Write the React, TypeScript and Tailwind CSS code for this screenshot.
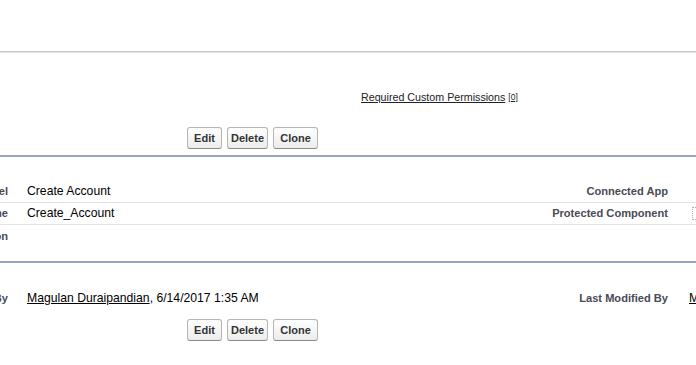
import React from "react";

const font = { fontFamily: '"Liberation Sans", Arial, sans-serif' };

function Btn({ label, w }: { label: string; w: string }) {
  return (
    <button
      className={`${w} h-[22px] flex items-center justify-center rounded-[3px] border border-[#b5b5b5] border-b-[#8a8a8a] bg-linear-to-b from-white to-[#ececec] text-[11px] font-bold text-[#333]`}
    >
      {label}
    </button>
  );
}

function Buttons() {
  return (
    <div className="flex gap-[5px] pl-[187px]">
      <Btn label="Edit" w="w-[35px]" />
      <Btn label="Delete" w="w-[41px]" />
      <Btn label="Clone" w="w-[45px]" />
    </div>
  );
}

function Row({
  label,
  value,
  rlabel,
  rvalue,
  border,
}: {
  label: string;
  value?: React.ReactNode;
  rlabel?: string;
  rvalue?: React.ReactNode;
  border?: boolean;
}) {
  return (
    <div
      className={`flex items-center h-[22px] ${border ? "border-b border-[#e3e3e3]" : ""}`}
    >
      <div className="w-[8px] shrink-0 flex justify-end whitespace-nowrap text-[11.1px] font-bold text-[#4a4a56]">
        <span>{label}</span>
      </div>
      <div className="flex-1 pl-[19px] whitespace-nowrap text-[12.2px] text-black">
        {value}
      </div>
      <div className="shrink-0 whitespace-nowrap text-[11.1px] font-bold text-[#4a4a56]">
        {rlabel}
      </div>
      <div className="w-[28px] shrink-0 pl-[21px] whitespace-nowrap text-[12.2px] text-black">
        {rvalue}
      </div>
    </div>
  );
}

export default function App() {
  return (
    <div
      className="w-[696px] h-[365px] overflow-hidden bg-white relative"
      style={font}
    >
      <div className="h-[51px]" />
      <div className="h-px bg-[#c8c8c8]" />
      <div className="h-px bg-[#e2e2e2]" />
      <div className="h-[102px] pt-[37px]">
        <div className="pl-[361px] h-[14px] flex items-center whitespace-nowrap">
          <span className="text-[10.7px] text-[#222] underline">
            Required Custom Permissions
          </span>
          <span className="ml-[3px] text-[8.5px] text-[#222] underline">[0]</span>
        </div>
        <div className="mt-[23px]">
          <Buttons />
        </div>
      </div>
      <div className="h-[2px] bg-[#98a3be]" />
      <div className="pt-[24px] h-[104px]">
        <Row
          label="Label"
          value="Create Account"
          rlabel="Connected App"
          border
        />
        <Row
          label="Name"
          value="Create_Account"
          rlabel="Protected Component"
          rvalue={
            <div className="ml-[3px] w-[12px] h-[13px] border border-dotted border-[#b0b0b0]" />
          }
          border
        />
        <Row label="Description" />
      </div>
      <div className="h-[2px] bg-[#98a3be]" />
      <div className="pt-[24px]">
        <Row
          label="Created By"
          value={
            <span>
              <span className="underline">Magulan Duraipandian</span>, 6/14/2017 1:35 AM
            </span>
          }
          rlabel="Last Modified By"
          rvalue={
            <span>
              <span className="underline">Magulan Duraipandian</span>, 6/14/2017 1:35 AM
            </span>
          }
        />
        <div className="mt-[10px]">
          <Buttons />
        </div>
      </div>
    </div>
  );
}
